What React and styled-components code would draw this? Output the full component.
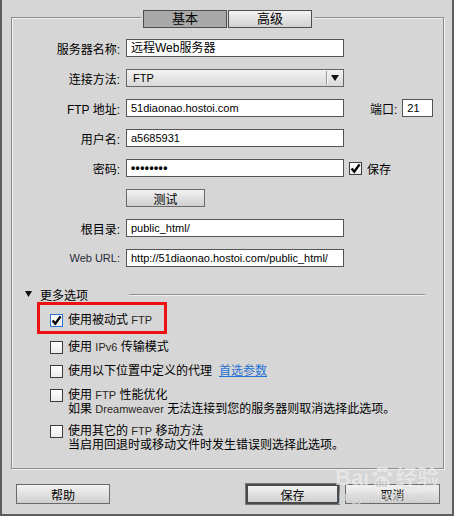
import styled, { createGlobalStyle } from 'styled-components';

const Page = createGlobalStyle`
  body {
    margin: 0;
    background: #d6d6d6;
    font-family: "Liberation Sans", "Noto Sans CJK SC", sans-serif;
  }
`;

function Check({ checked, focus }) {
    return (
        <Box $focus={focus}>
            {checked ? (
                <svg width="11" height="11" viewBox="0 0 11 11">
                    <path d="M1.6 5.4 L4.3 8.6 L9.6 1.4" fill="none" stroke="#000" strokeWidth="2.4" />
                </svg>
            ) : null}
        </Box>
    );
}

function Option({ checked, focus, children, hint, extra }) {
    return (
        <OptionItem>
            <OptionRow>
                <Check checked={checked} focus={focus} />
                <span>{children}</span>
                {extra}
            </OptionRow>
            {hint ? <Hint>{hint}</Hint> : null}
        </OptionItem>
    );
}

function App() {
    return (<>
        <Page />
        <Window>
            <Panel>
                <TabBar>
                    <Tab $active>基本</Tab>
                    <Tab>高级</Tab>
                </TabBar>

                <Form>
                    <Row>
                        <Label>服务器名称:</Label>
                        <Field $cjk>远程Web服务器</Field>
                    </Row>
                    <Row>
                        <Label>连接方法:</Label>
                        <Select>
                            <span>FTP</span>
                            <SelectArrow>
                                <svg width="8" height="6" viewBox="0 0 8 6"><polygon points="0,0 8,0 4,6" fill="#111" /></svg>
                            </SelectArrow>
                        </Select>
                    </Row>
                    <Row>
                        <Label>FTP 地址:</Label>
                        <Field>51diaonao.hostoi.com</Field>
                        <SideLabel>端口:</SideLabel>
                        <Field $w={31}>21</Field>
                    </Row>
                    <Row>
                        <Label>用户名:</Label>
                        <Field>a5685931</Field>
                    </Row>
                    <Row>
                        <Label>密码:</Label>
                        <Field $secret>••••••••</Field>
                        <InlineCheck>
                            <Check checked />
                            <span>保存</span>
                        </InlineCheck>
                    </Row>
                    <Row>
                        <Label />
                        <Button $w={79} $h={18}>测试</Button>
                    </Row>
                    <Row>
                        <Label>根目录:</Label>
                        <Field>public_html/</Field>
                    </Row>
                    <Row>
                        <Label $latin>Web URL:</Label>
                        <Field>http://51diaonao.hostoi.com/public_html/</Field>
                    </Row>
                </Form>

                <SectionHeader>
                    <svg width="7" height="6" viewBox="0 0 7 6"><polygon points="0,0 7,0 3.5,6" fill="#111" /></svg>
                    <SectionTitle>更多选项</SectionTitle>
                    <SectionLine />
                </SectionHeader>

                <Options>
                    <Highlight>
                        <Option checked focus>使用被动式 <Latin>FTP</Latin></Option>
                    </Highlight>
                    <Option>使用 <Latin>IPv6</Latin> 传输模式</Option>
                    <Option extra={<Link>首选参数</Link>}>使用以下位置中定义的代理</Option>
                    <Option hint={<>如果 <Latin>Dreamweaver</Latin> 无法连接到您的服务器则取消选择此选项。</>}>
                        使用 <Latin>FTP</Latin> 性能优化
                    </Option>
                    <Option hint="当启用回退时或移动文件时发生错误则选择此选项。">
                        使用其它的 <Latin>FTP</Latin> 移动方法
                    </Option>
                </Options>
            </Panel>

            <ButtonBar>
                <Button $w={94}>帮助</Button>
                <ButtonGroup>
                    <Button $w={93} $default>保存</Button>
                    <Button $w={95}>取消</Button>
                </ButtonGroup>
            </ButtonBar>

            <Watermark>
                <WatermarkLogo>
                    Bai
                    <Paw>
                        <svg width="22" height="24" viewBox="0 0 22 24">
                            <circle cx="4" cy="8" r="2.6" fill="#eeeeee" />
                            <circle cx="8.5" cy="3.5" r="2.8" fill="#eeeeee" />
                            <circle cx="14" cy="3.5" r="2.8" fill="#eeeeee" />
                            <circle cx="18.5" cy="8" r="2.6" fill="#eeeeee" />
                            <path d="M3 21 C3 14 7 10 11 10 C15 10 19 14 19 21 C19 24 3 24 3 21 Z" fill="#eeeeee" />
                        </svg>
                        <PawText>du</PawText>
                    </Paw>
                    经验
                </WatermarkLogo>
                <WatermarkUrl>jingyan.baidu.com</WatermarkUrl>
            </Watermark>
        </Window>
    </>);
}

const Window = styled.div`
  position: relative;
  box-sizing: border-box;
  width: 454px;
  height: 516px;
  padding: 17px 8px 0 9px;
  background: #d6d6d6;
  border-left: 2px solid #5e5e5e;
  border-right: 2px solid #5e5e5e;
  border-bottom: 2px solid #5e5e5e;
  display: flex;
  flex-direction: column;
  overflow: hidden;
`;

const Panel = styled.div`
  display: flex;
  flex-direction: column;
  border: 1px solid #8c8c8c;
  box-shadow: 1px 1px 0 #f1f1f1, inset 1px 1px 0 #f1f1f1;
  padding-bottom: 18px;
`;

const TabBar = styled.div`
  align-self: center;
  margin-top: -8px;
  display: flex;
  gap: 1px;
  padding: 0 2px;
  background: #d6d6d6;
`;

const Tab = styled.div`
  box-sizing: border-box;
  width: 84px;
  height: 18px;
  border: 1px solid #4e4e4e;
  background: ${p => p.$active ? '#a9a9a9' : 'linear-gradient(#f2f2f2, #d2d2d2)'};
  font-size: 13px;
  line-height: 16px;
  text-align: center;
  color: #000;
`;

const Form = styled.div`
  display: flex;
  flex-direction: column;
  gap: 12px;
  margin-top: 11px;
`;

const Row = styled.div`
  display: flex;
  align-items: center;
  height: 18px;
`;

const Label = styled.div`
  box-sizing: border-box;
  width: 114px;
  padding-right: 6px;
  text-align: right;
  font-size: ${p => p.$latin ? '11px' : '12px'};
  color: ${p => p.$latin ? '#2a2a3a' : '#000'};
  white-space: nowrap;
`;

const Field = styled.div`
  box-sizing: border-box;
  width: ${p => p.$w || 218}px;
  height: 18px;
  padding: 0 4px;
  border: 1px solid #555;
  background: #fff;
  font-family: "Liberation Sans", "Noto Sans CJK SC", sans-serif;
  font-size: ${p => p.$cjk || p.$secret ? '12px' : '11px'};
  font-weight: ${p => p.$secret ? 'bold' : 'normal'};
  letter-spacing: ${p => p.$secret ? '0.4px' : '0'};
  line-height: 16px;
  color: #000;
  white-space: nowrap;
  overflow: hidden;
`;

const Select = styled.div`
  box-sizing: border-box;
  width: 218px;
  height: 18px;
  display: flex;
  align-items: center;
  justify-content: space-between;
  padding-left: 6px;
  border: 1px solid #666;
  background: linear-gradient(#f3f3f3, #d9d9d9);
  font-size: 11px;
  color: #000;
`;

const SelectArrow = styled.span`
  display: flex;
  align-items: center;
  justify-content: center;
  width: 16px;
  height: 14px;
  border-left: 1px solid #9a9a9a;
  box-shadow: inset 1px 0 0 #f5f5f5;
`;

const SideLabel = styled.span`
  margin-left: 26px;
  margin-right: 5px;
  font-size: 12px;
  color: #000;
`;

const InlineCheck = styled.label`
  display: flex;
  align-items: center;
  gap: 5px;
  margin-left: 5px;
  font-size: 12px;
  color: #000;
`;

const Box = styled.span`
  box-sizing: border-box;
  flex: none;
  width: 13px;
  height: 13px;
  display: flex;
  align-items: center;
  justify-content: center;
  border: 1px solid ${p => p.$focus ? '#2a78d4' : '#3d3d3d'};
  background: linear-gradient(#ffffff, #ececec);
`;

const Button = styled.div`
  box-sizing: border-box;
  width: ${p => p.$w}px;
  height: ${p => p.$h || 20}px;
  border: ${p => p.$default ? '2px solid #4a4a4a' : '1px solid #6a6a6a'};
  box-shadow: ${p => p.$default ? '0 0 0 1px #777' : 'none'};
  background: linear-gradient(#f3f3f3, #cfcfcf);
  font-size: 12px;
  display: flex;
  align-items: center;
  justify-content: center;
  color: #000;
`;

const SectionHeader = styled.div`
  display: flex;
  align-items: center;
  height: 14px;
  margin-top: 20px;
  padding: 0 18px 0 13px;
`;

const SectionTitle = styled.span`
  margin-left: 8px;
  font-size: 12px;
  color: #000;
`;

const SectionLine = styled.span`
  flex: 1;
  height: 1px;
  margin-left: 41px;
  background: #8f8f8f;
  box-shadow: 0 1px 0 #efefef;
`;

const Options = styled.div`
  display: flex;
  flex-direction: column;
  gap: 11px;
  margin-top: 1px;
  padding-left: 38px;
`;

const Highlight = styled.div`
  align-self: flex-start;
  margin-left: -13px;
  margin-bottom: -4px;
  padding: 9px 12px 4px 10px;
  border: 3px solid #ee1111;
`;

const OptionItem = styled.div`
  display: flex;
  flex-direction: column;
`;

const OptionRow = styled.div`
  display: flex;
  align-items: center;
  height: 13px;
  gap: 5px;
  font-size: 12px;
  line-height: 13px;
  color: #000;
  white-space: nowrap;
`;

const Latin = styled.span`
  font-size: 11px;
  color: #2b2620;
`;

const Link = styled.span`
  margin-left: 2px;
  color: #1f72d2;
  text-decoration: underline;
`;

const Hint = styled.div`
  padding-left: 18px;
  margin-bottom: -2px;
  font-size: 12px;
  line-height: 14px;
  color: #000;
  white-space: nowrap;
`;

const ButtonBar = styled.div`
  display: flex;
  align-items: center;
  justify-content: space-between;
  margin-top: 15px;
  padding: 0 4px 0 5px;
`;

const ButtonGroup = styled.div`
  display: flex;
  align-items: center;
  gap: 6px;
`;

const Watermark = styled.div`
  position: absolute;
  left: 333px;
  top: 466px;
  display: flex;
  flex-direction: column;
  align-items: center;
  pointer-events: none;
  opacity: 0.7;
`;

const WatermarkLogo = styled.div`
  display: flex;
  align-items: center;
  font-size: 22px;
  font-weight: bold;
  line-height: 24px;
  color: #ededed;
  text-shadow: 0 0 1px #b8b8b8;
`;

const Paw = styled.span`
  position: relative;
  display: flex;
  margin: 0 2px;
`;

const PawText = styled.span`
  position: absolute;
  left: 4px;
  bottom: 1px;
  font-size: 10px;
  line-height: 10px;
  color: #c4c4c4;
  text-shadow: none;
`;

const WatermarkUrl = styled.div`
  font-size: 12px;
  line-height: 14px;
  color: #e6e6e6;
  text-shadow: 0 0 1px #b5b5b5;
`;

export default App
